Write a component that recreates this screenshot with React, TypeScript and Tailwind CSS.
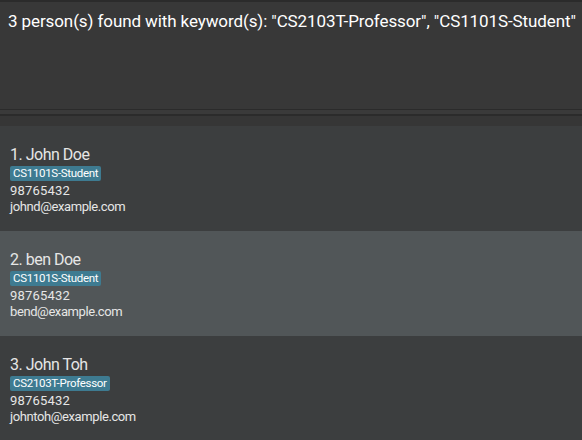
const persons = [
  { name: 'John Doe', tag: 'CS1101S-Student', phone: '98765432', email: 'johnd@example.com' },
  { name: 'ben Doe', tag: 'CS1101S-Student', phone: '98765432', email: 'bend@example.com' },
  { name: 'John Toh', tag: 'CS2103T-Professor', phone: '98765432', email: 'johntoh@example.com' },
];

function PersonCard({ index, person }: { index: number; person: (typeof persons)[number] }) {
  const odd = index % 2 === 1;
  return (
    <div className={`h-[105px] shrink-0 pl-[10px] pt-[19px] text-[#e6e6e6] ${odd ? 'bg-[#515658]' : 'bg-[#3c3e3f]'}`}>
      <div className="text-[16px] leading-[20px] tracking-[-0.5px]">
        {index + 1}. {person.name}
      </div>
      <div className="mt-[1px] flex">
        <span className="rounded-[2px] bg-[#3e7b91] px-[3px] text-[11.5px] leading-[15px] tracking-[-0.3px] text-white">
          {person.tag}
        </span>
      </div>
      <div className="mt-[2px] text-[13px] leading-[16px] tracking-[0.2px]">{person.phone}</div>
      <div className="text-[13px] leading-[16px] tracking-[-0.4px]">{person.email}</div>
    </div>
  );
}

export default function App() {
  return (
    <div className="flex h-[440px] w-[582px] flex-col overflow-hidden bg-[#383838] font-['Roboto','Noto_Sans',sans-serif]">
      <div className="h-[110px] shrink-0 border-t-[2px] border-b border-[#2b2b2b] bg-[#383838] px-[8px] pt-[7px]">
        <p className="whitespace-nowrap text-[17px] leading-[24px] tracking-[-0.1px] text-white">
          3 person(s) found with keyword(s): "CS2103T-Professor", "CS1101S-Student"
        </p>
      </div>
      <div className="h-[6px] shrink-0 border-b-2 border-[#2b2b2b] bg-[#3a3a3a]" />
      <div className="flex flex-1 flex-col bg-[#363636] pt-[10px]">
        {persons.map((p, i) => (
          <PersonCard key={p.email} index={i} person={p} />
        ))}
      </div>
    </div>
  );
}
